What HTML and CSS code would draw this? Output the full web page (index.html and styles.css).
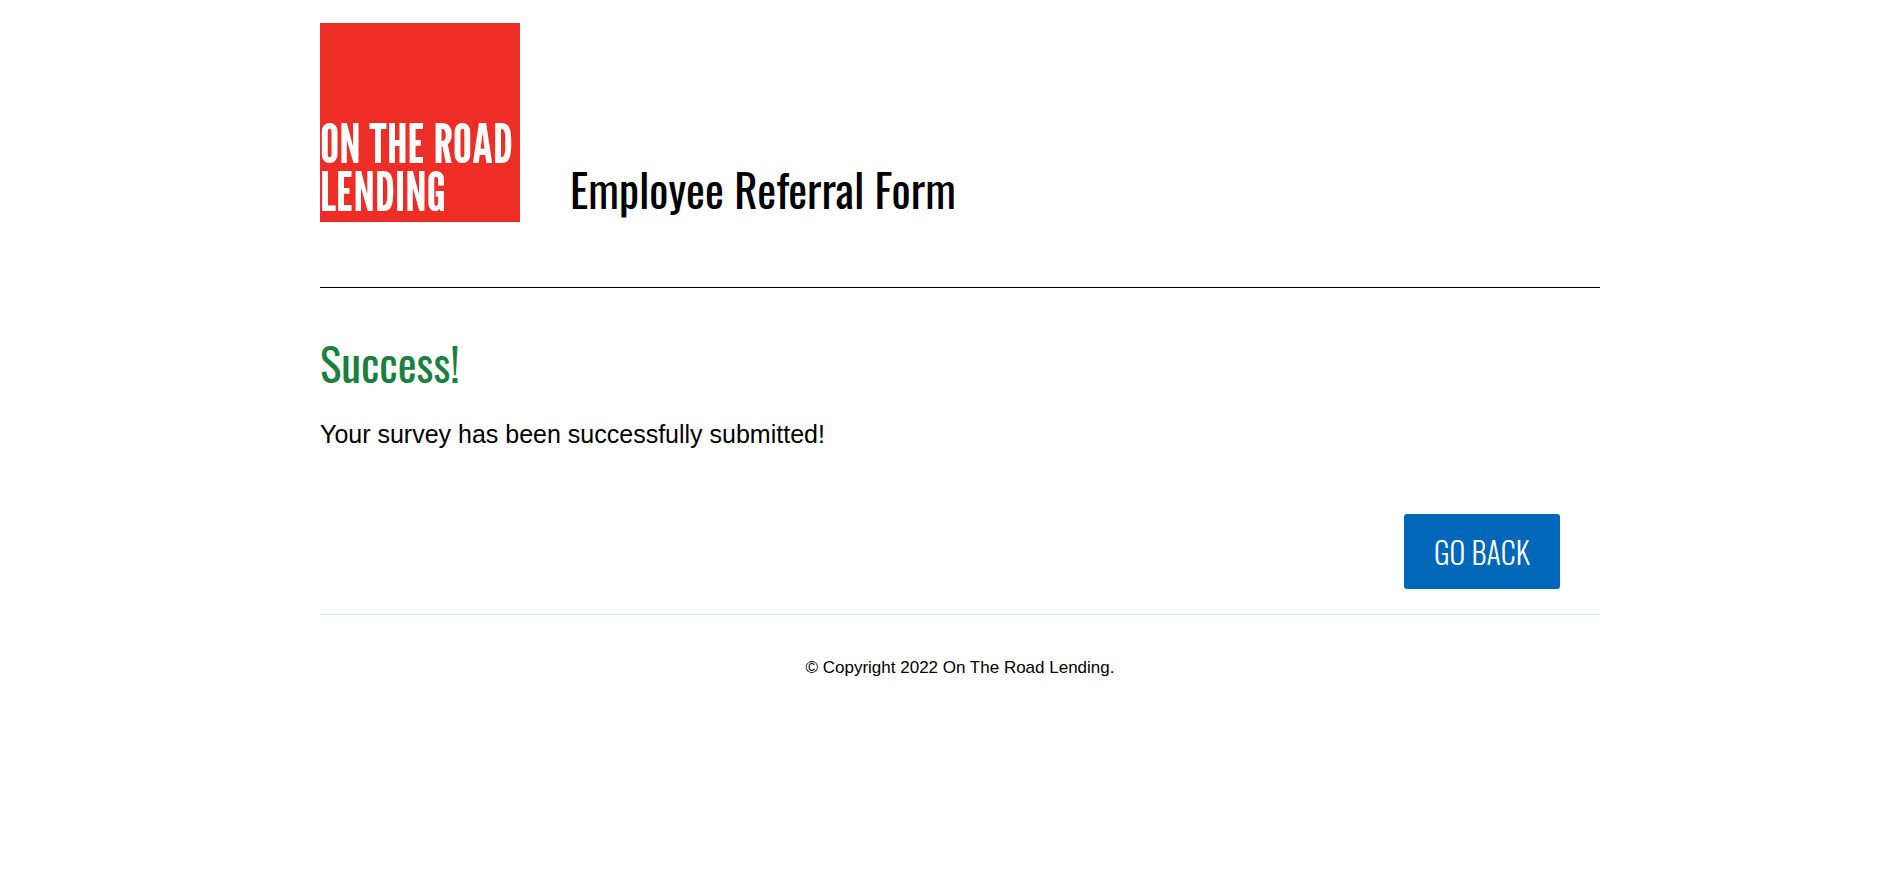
FILE: index.html
```html
<!DOCTYPE html>
<html lang="en">
<head>
<meta charset="utf-8">
<title>Employee Referral Form</title>
<link rel="stylesheet" href="styles.css">
</head>
<body>
<div class="page">
  <header class="header">
    <div class="logo">ON THE ROAD<br>LENDING</div>
    <h1 class="title">Employee Referral Form</h1>
  </header>
  <main class="content">
    <h2 class="success">Success!</h2>
    <p class="message">Your survey has been successfully submitted!</p>
    <div class="actions"><button type="button" class="button">GO BACK</button></div>
  </main>
  <footer class="footer">© Copyright 2022 On The Road Lending.</footer>
</div>
</body>
</html>
```
FILE: styles.css
```css
* { box-sizing: border-box; }
body {
  margin: 0;
  padding: 23px 0 0 24px;
  background: #fff;
  color: #000;
  font-family: "Liberation Sans", Arial, sans-serif;
}
.page { max-width: 1280px; margin: 0 auto; }
.header {
  display: flex;
  align-items: flex-end;
  gap: 50px;
  padding-bottom: 65px;
  border-bottom: 1px solid #000;
}
.title, .success, .button {
  font-family: Oswald, "Liberation Sans Narrow", sans-serif;
}
.logo {
  width: 200px;
  height: 199px;
  padding-top: 97px;
  background: #ee2e26;
  color: #fff;
  font-family: "League Gothic", Antonio, "Bebas Neue", Oswald, sans-serif;
  font-size: 54px;
  font-weight: 400;
  line-height: 48px;
  white-space: nowrap;
}
.title, .success { margin: 0; font-size: 45px; font-weight: 400; line-height: 60px; }
.title { padding-bottom: 3px; }
.success { color: #198040; }
.content { padding: 45px 0 25px; border-bottom: 1px solid #dee5e6; }
.message { margin: 23px 0 0; font-size: 25px; line-height: 36px; }
.actions { display: flex; justify-content: flex-end; padding: 62px 40px 0 0; }
.button {
  min-width: 156px;
  height: 75px;
  padding: 0 28px;
  border: 0;
  border-radius: 3px;
  background: #0067b9;
  color: #fff;
  font-size: 30px;
  font-weight: 300;
}
.footer { padding: 40px 0; text-align: center; font-size: 17px; line-height: 26px; }
```
